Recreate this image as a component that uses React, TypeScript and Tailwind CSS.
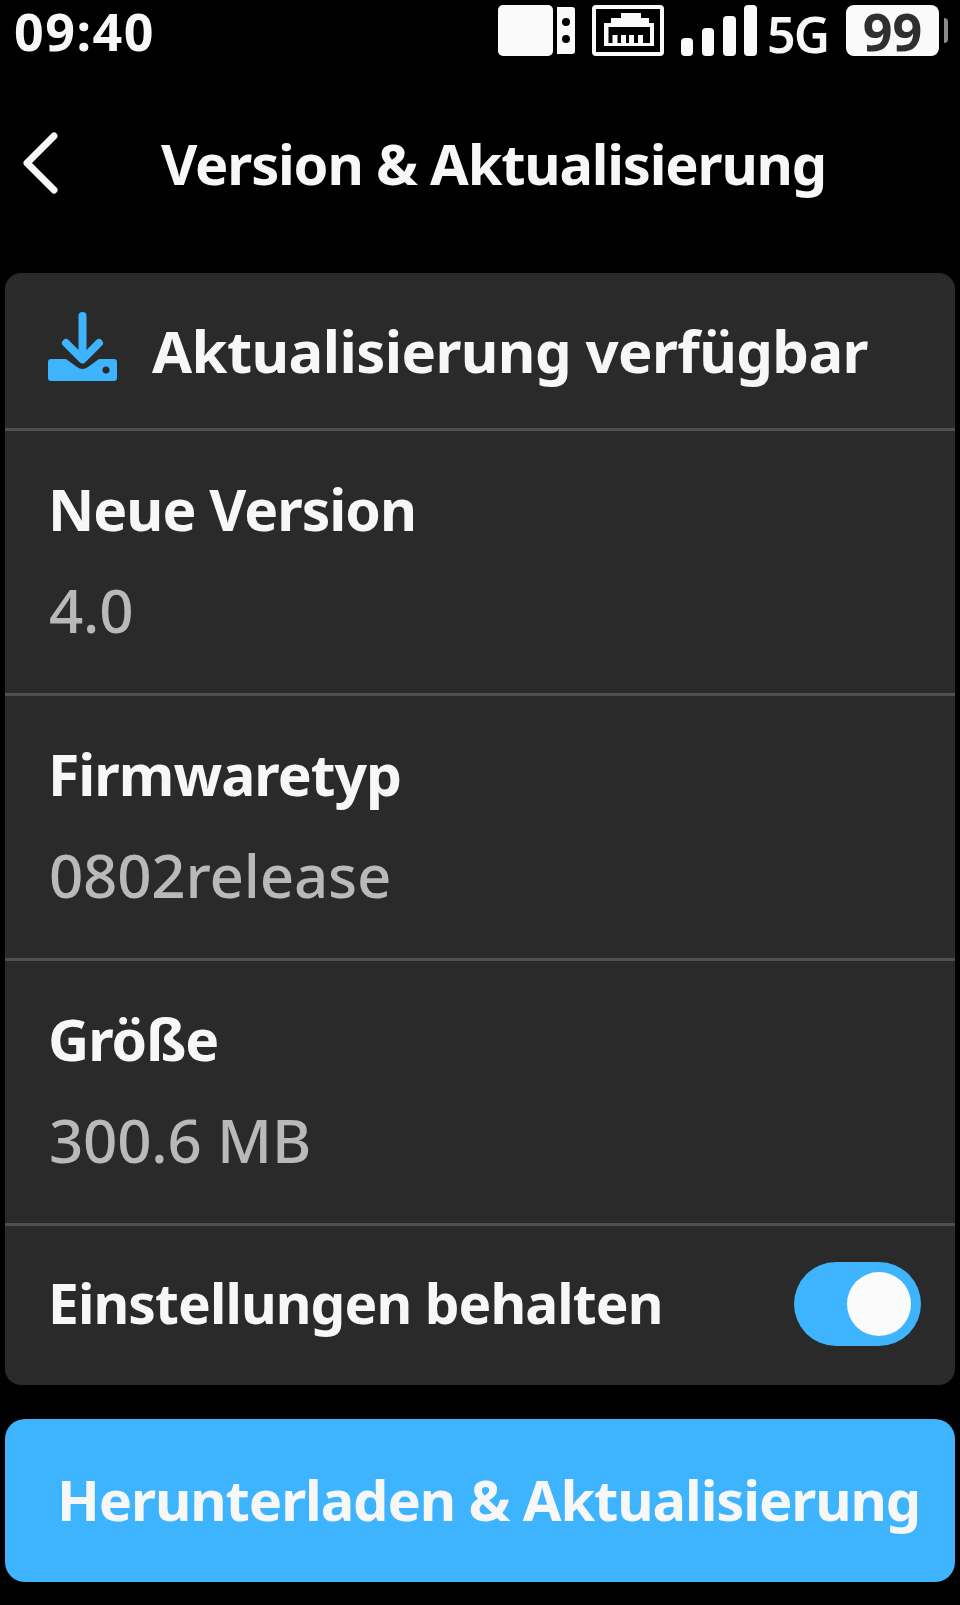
import React from "react";

const font = { fontFamily: '"Noto Sans", sans-serif' };

function Row({ label, value }: { label: string; value: string }) {
  return (
    <div className="h-[265px] border-b-[3px] border-[#4f4f4f] pl-[43px] pt-[40px] box-border">
      <div className="text-[57px] leading-[76px] font-bold tracking-[-1px] text-[#f7f7f7]">{label}</div>
      <div className="mt-[25px] ml-[1px] text-[60px] leading-[76px] font-medium tracking-[-0.2px] text-[#b9b9b9]">{value}</div>
    </div>
  );
}

function StatusIcons() {
  return (
    <div className="flex items-center h-[51px] mt-[5px]">
      <svg width="77" height="51" viewBox="0 0 77 51">
        <rect x="0" y="0" width="55" height="51" rx="5" fill="#fafafa" />
        <path d="M59 2h15a3 3 0 0 1 3 3v41a3 3 0 0 1-3 3H59z" fill="#fafafa" />
        <circle cx="68" cy="17" r="4" fill="#000" />
        <circle cx="68" cy="34" r="4" fill="#000" />
      </svg>
      <svg width="72" height="51" viewBox="0 0 72 51" className="ml-[17px]">
        <rect x="2" y="2" width="68" height="47" rx="2" fill="none" stroke="#fafafa" strokeWidth="4" />
        <path d="M12 41V18h7v-5h10V8h20v5h8v5h5v23z" fill="#fafafa" />
        <path d="M16.500 22H58V38H51V30H46V38H42V30H37V38H34V30H29V38H25.500V30H20.500V38H16.500z" fill="#000" />
      </svg>
      <svg width="76" height="51" viewBox="0 0 76 51" className="ml-[17px]">
        <rect x="0" y="33" width="12" height="18" rx="4" fill="#fafafa" />
        <rect x="21" y="23" width="12" height="28" rx="4" fill="#fafafa" />
        <rect x="42" y="11" width="13" height="40" rx="4" fill="#fafafa" />
        <rect x="63" y="0" width="13" height="51" rx="4" fill="#fafafa" />
      </svg>
      <span className="ml-[10px] mt-[6px] text-[50px] leading-[56px] font-semibold text-[#f7f7f7] tracking-[-2px]">5G</span>
      <div className="ml-[18px] h-[51px] w-[93px] rounded-[8px] bg-[#fafafa] flex items-center justify-center">
        <span className="text-[52px] leading-[51px] font-bold text-[#2f2f2f]">99</span>
      </div>
      <div className="ml-[5px] h-[25px] w-[4px] rounded-r-sm bg-[#8a8a8a]" />
    </div>
  );
}

export default function App() {
  return (
    <div style={font} className="w-[960px] h-[1605px] bg-black overflow-hidden box-border flex flex-col">
      <div className="h-[64px] pl-[14px] pr-[12px] flex items-start justify-between box-border">
        <span className="mt-[3px] text-[52px] leading-[56px] font-bold tracking-[1.5px] text-[#f7f7f7]">09:40</span>
        <StatusIcons />
      </div>
      <div className="h-[209px] pb-[11px] flex items-center box-border">
        <svg width="38" height="64" viewBox="0 0 38 64" className="ml-[21px]">
          <path d="M33 5 L6 32 L33 59" fill="none" stroke="#f7f7f7" strokeWidth="7" strokeLinecap="round" strokeLinejoin="round" />
        </svg>
        <span className="ml-[102px] text-[56px] leading-[76px] font-bold tracking-[-1.2px] text-[#f7f7f7]">Version &amp; Aktualisierung</span>
      </div>
      <div className="mx-[5px] h-[1112px] rounded-[16px] bg-[#2a2a2a] overflow-hidden">
        <div className="h-[158px] border-b-[3px] border-[#4f4f4f] flex items-center pl-[43px] box-border">
          <svg width="69" height="69" viewBox="0 0 69 69" className="mb-[8px]">
            <path d="M34.500 4v38" stroke="#3db4fd" strokeWidth="8" strokeLinecap="round" />
            <path d="M18 31l16.500 16.500L51 31" fill="none" stroke="#3db4fd" strokeWidth="8" strokeLinecap="round" strokeLinejoin="round" />
            <path d="M3 47h15l11 8a9 9 0 0 0 11 0l11-8h15a3 3 0 0 1 3 3v16a3 3 0 0 1-3 3H3a3 3 0 0 1-3-3V50a3 3 0 0 1 3-3z" fill="#3db4fd" />
            <circle cx="58" cy="58" r="3.500" fill="#2a2a2a" />
          </svg>
          <span className="ml-[35px] text-[58px] leading-[76px] font-bold tracking-[-0.6px] text-[#f7f7f7]">Aktualisierung verfügbar</span>
        </div>
        <Row label="Neue Version" value="4.0" />
        <Row label="Firmwaretyp" value="0802release" />
        <Row label="Größe" value="300.6 MB" />
        <div className="h-[159px] pl-[43px] pr-[34px] pb-[4px] flex items-center justify-between box-border">
          <span className="mb-[1px] text-[55px] leading-[76px] font-bold tracking-[-0.9px] text-[#f7f7f7]">Einstellungen behalten</span>
          <div className="w-[127px] h-[84px] rounded-full bg-[#3db4fd] flex items-center justify-end pr-[10px] box-border">
            <div className="w-[64px] h-[64px] rounded-full bg-[#fbfbfb]" />
          </div>
        </div>
      </div>
      <div className="mx-[5px] mt-[34px] h-[163px] rounded-[20px] bg-[#3db4fd] flex items-center pl-[52px] pb-[4px] box-border">
        <span className="text-[56px] leading-[76px] font-bold tracking-[-1.1px] text-[#f7f7f7] whitespace-nowrap">Herunterladen &amp; Aktualisierung</span>
      </div>
    </div>
  );
}
